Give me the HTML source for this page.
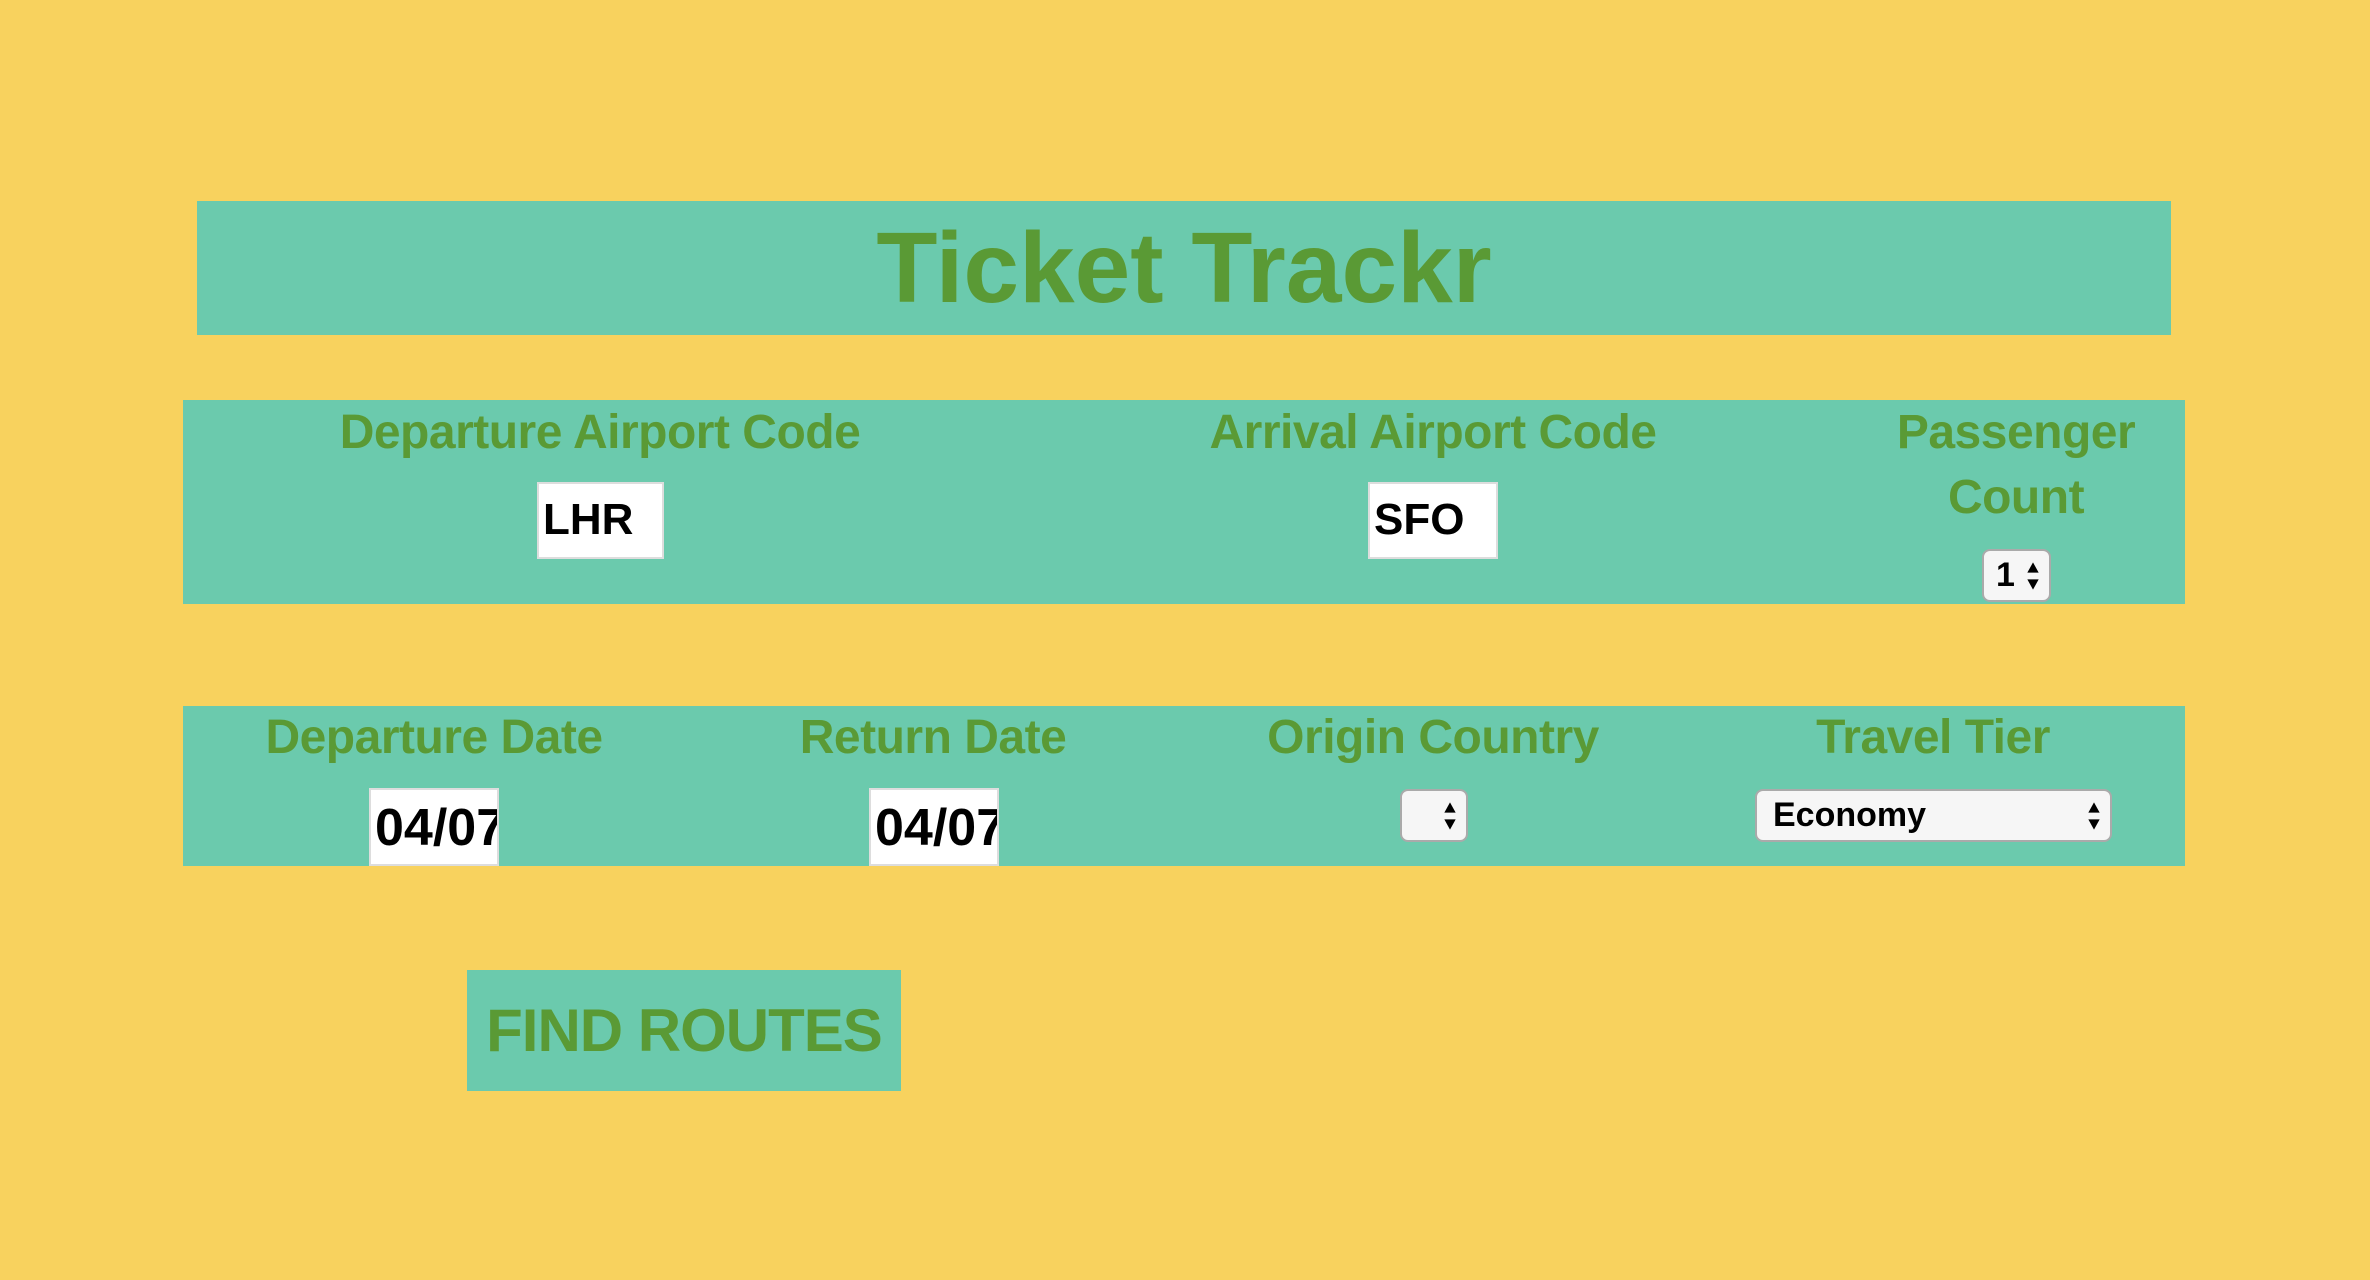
<!DOCTYPE html>
<html><head><meta charset="utf-8"><style>
*{margin:0;padding:0;box-sizing:border-box}
body{width:2370px;height:1280px;background:#F8D25E;position:relative;overflow:hidden;font-family:"Liberation Sans",sans-serif;font-weight:bold}
.bar{position:absolute;background:#6BCAAD}
.t{position:absolute;color:#5A9A35;text-align:center;white-space:nowrap}
.lbl{font-size:48px;line-height:50px;letter-spacing:-0.5px}
.inp{position:absolute;background:#fff;border:2px solid #ddd;color:#000;font-size:44px;line-height:72px;padding-left:4px;overflow:hidden;white-space:nowrap}
.sel{position:absolute;background:#f6f6f6;border:2px solid #aaa;border-radius:8px;color:#000}
.arr{position:absolute;right:8px;top:50%;transform:translateY(-50%);width:16px;height:34px}
</style></head><body>
<div class="bar" style="left:197px;top:201px;width:1974px;height:134px"></div>
<div class="t" style="left:197px;width:1974px;top:210px;font-size:100px;line-height:116px">Ticket Trackr</div>

<div class="bar" style="left:183px;top:400px;width:2002px;height:204px"></div>
<div class="t lbl" style="left:300px;width:600px;top:408px">Departure Airport Code</div>
<div class="inp" style="left:537px;top:482px;width:127px;height:77px">LHR</div>
<div class="t lbl" style="left:1133px;width:600px;top:408px">Arrival Airport Code</div>
<div class="inp" style="left:1368px;top:482px;width:130px;height:77px">SFO</div>
<div class="t lbl" style="left:1866px;width:300px;top:400px;line-height:65px">Passenger<br>Count</div>
<div class="sel" style="left:1982px;top:549px;width:69px;height:53px;font-size:34px;line-height:49px;padding-left:12px">1<svg class="arr" viewBox="0 0 14 30"><path d="M7 3L12 12H2Z M7 27L12 18H2Z" fill="#000"/></svg></div>

<div class="bar" style="left:183px;top:706px;width:2002px;height:160px"></div>
<div class="t lbl" style="left:234px;width:400px;top:713px">Departure Date</div>
<div class="inp" style="left:369px;top:788px;width:130px;height:78px;font-size:52px;line-height:76px">04/07</div>
<div class="t lbl" style="left:733px;width:400px;top:713px">Return Date</div>
<div class="inp" style="left:869px;top:788px;width:130px;height:78px;font-size:52px;line-height:76px">04/07</div>
<div class="t lbl" style="left:1183px;width:500px;top:713px">Origin Country</div>
<div class="sel" style="left:1400px;top:789px;width:68px;height:53px"><svg class="arr" viewBox="0 0 14 30"><path d="M7 3L12 12H2Z M7 27L12 18H2Z" fill="#000"/></svg></div>
<div class="t lbl" style="left:1733px;width:400px;top:713px">Travel Tier</div>
<div class="sel" style="left:1755px;top:789px;width:357px;height:53px;font-size:34px;line-height:49px;padding-left:16px">Economy<svg class="arr" viewBox="0 0 14 30"><path d="M7 3L12 12H2Z M7 27L12 18H2Z" fill="#000"/></svg></div>

<div class="bar" style="left:467px;top:970px;width:434px;height:121px"></div>
<div class="t" style="left:467px;width:434px;top:995px;font-size:60px;line-height:72px;letter-spacing:-1px">FIND ROUTES</div>
</body></html>
